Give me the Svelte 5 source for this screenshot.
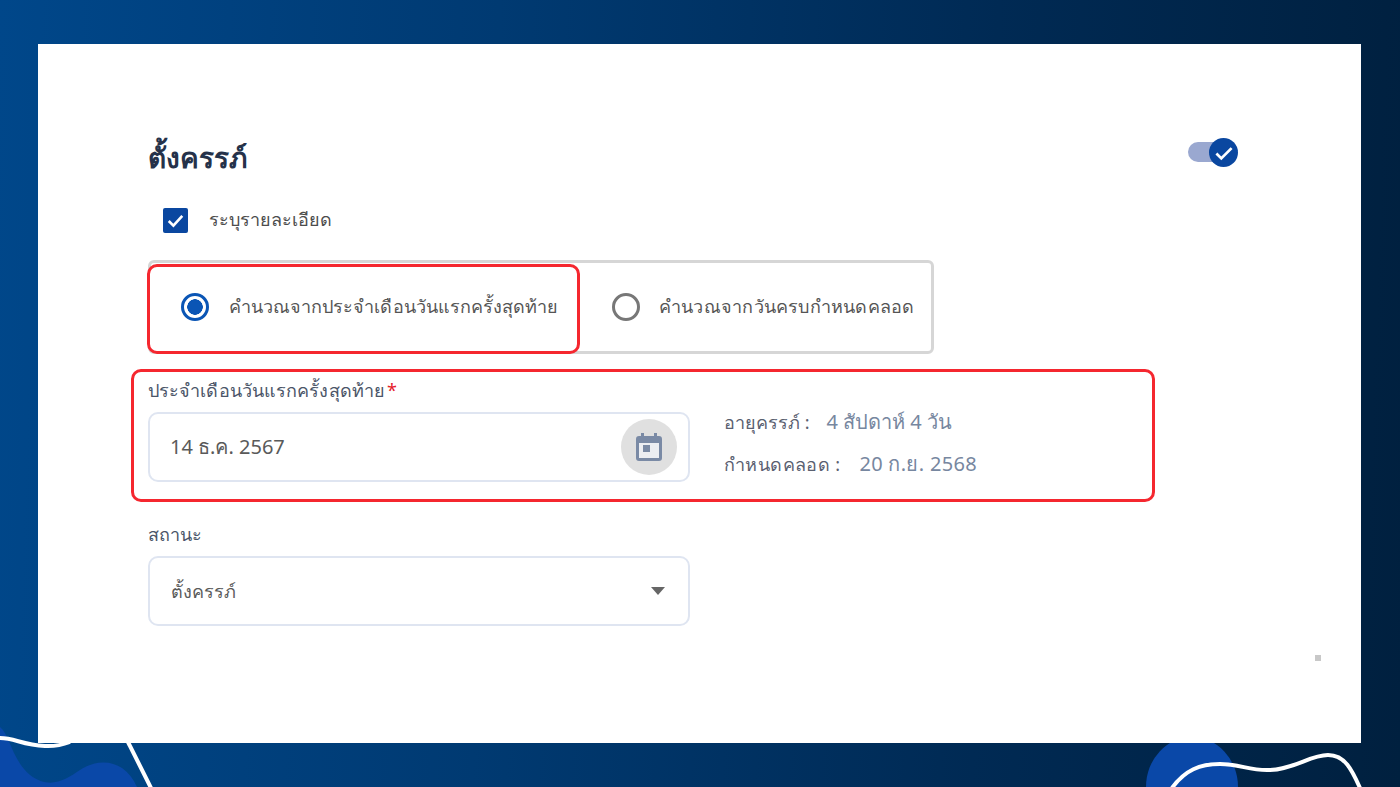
<script lang="ts">
	let detailed = $state(true);
	let method = $state('lmp');
	let status = $state('ตั้งครรภ์');
</script>

<div class="page">
	<svg class="decor" viewBox="0 0 1400 787" aria-hidden="true">
		<path class="blob" d="M0 727C10 735 12 760 30 775C50 790 65 780 80 770C100 757 125 760 137 787L0 787Z" />
		<ellipse class="blob" cx="1192" cy="787" rx="46" ry="50" />
		<path class="wave" d="M0 738C15 738 22 745 45 746C55 746.500 62 745 70 742" />
		<path class="wave" d="M128 742L151 788" />
		<path class="wave" d="M1172 788C1185 770 1200 764 1220 764C1240 764 1250 771 1270 770C1295 769 1310 755 1328 755C1345 755 1352 770 1360 788" />
	</svg>

	<main class="card">
		<header class="head">
			<h1>ตั้งครรภ์</h1>
			<button class="toggle" aria-label="toggle">
				<span class="knob">
					<svg viewBox="0 0 24 24" width="26" height="26"><path d="M5 12.500l4.500 4.500L19 7.500" /></svg>
				</span>
			</button>
		</header>

		<label class="check">
			<span class="box">
				<svg viewBox="0 0 24 24" width="27" height="27"><path d="M5.500 12.500l4.500 4.500 8.500-9.500" /></svg>
			</span>
			<input type="checkbox" bind:checked={detailed} />
			<span class="check-text">ระบุรายละเอียด</span>
		</label>

		<div class="radios">
			<label class="option first">
				<span class="radio on"></span>
				<input type="radio" value="lmp" bind:group={method} />
				คำนวณจากประจำเดือนวันแรกครั้งสุดท้าย
			</label>
			<label class="option second">
				<span class="radio"></span>
				<input type="radio" value="edd" bind:group={method} />
				คำนวณจากวันครบกำหนดคลอด
			</label>
		</div>

		<section class="date-box">
			<div class="field-label date-label">ประจำเดือนวันแรกครั้งสุดท้าย<span class="req">*</span></div>
			<div class="date-row">
				<div class="input">
					<span>14 ธ.ค. 2567</span>
					<span class="cal">
						<svg viewBox="0 0 26 28" width="26" height="28">
							<rect class="cal-bg" x="2" y="9" width="22" height="17" />
							<path d="M5 0h3v3h10V0h3v3h2a3 3 0 0 1 3 3v19a3 3 0 0 1-3 3H3a3 3 0 0 1-3-3V6a3 3 0 0 1 3-3h2zM3 10v15h20V10z" fill-rule="evenodd" />
							<rect x="7" y="12" width="7" height="7" />
						</svg>
					</span>
				</div>
				<div class="info">
					<div><b>อายุครรภ์ :</b><span>4 สัปดาห์ 4 วัน</span></div>
					<div class="due"><b>กำหนดคลอด :</b><span>20 ก.ย. 2568</span></div>
				</div>
			</div>
		</section>

		<div class="field-label status-label">สถานะ</div>
		<div class="input select">
			<span>{status}</span>
			<span class="caret"></span>
		</div>

		<span class="dot"></span>
	</main>
</div>

<style>
	:global(body) {
		margin: 0;
		font-family: "Noto Sans", "DejaVu Sans", sans-serif;
	}

	.page {
		position: relative;
		height: 787px;
		overflow: hidden;
		background: linear-gradient(92deg, #00478a 0%, #003a72 35%, #002a54 70%, #00203f 100%);
	}

	.decor {
		position: absolute;
		inset: 0;
		width: 1400px;
		height: 787px;
	}

	.blob {
		fill: #0a48a8;
	}

	.wave {
		fill: none;
		stroke: #fff;
		stroke-width: 4;
	}

	.card {
		position: relative;
		box-sizing: border-box;
		width: 1323px;
		height: 699px;
		margin-left: 38px;
		top: 44px;
		padding: 93px 123px 0 110px;
		background: #fff;
		color: #4d4d4d;
		font-size: 18px;
	}

	.head {
		display: flex;
		justify-content: space-between;
		align-items: flex-start;
		height: 40px;
	}

	h1 {
		margin: 0;
		font-size: 28px;
		line-height: 40px;
		font-weight: 700;
		color: #25324a;
	}

	.toggle {
		position: relative;
		width: 50px;
		height: 30px;
		padding: 0;
		border: 0;
		background: none;
	}

	.toggle::before {
		content: "";
		position: absolute;
		left: 0;
		top: 5px;
		width: 40px;
		height: 20px;
		border-radius: 10px;
		background: #9aa8d0;
	}

	.knob {
		position: absolute;
		right: 0;
		top: 1px;
		width: 29px;
		height: 29px;
		border-radius: 50%;
		background: #0a47a0;
		display: flex;
		align-items: center;
		justify-content: center;
	}

	.knob path,
	.box path {
		fill: none;
		stroke: #fff;
		stroke-width: 2.500;
	}

	.check {
		display: flex;
		align-items: center;
		gap: 21px;
		height: 32px;
		margin: 27px 0 0 15px;
	}

	.check-text {
		padding-bottom: 2px;
	}

	.check input,
	.option input {
		display: none;
	}

	.box {
		width: 25px;
		height: 25px;
		border-radius: 2px;
		background: #0a47a0;
		display: flex;
		align-items: center;
		justify-content: center;
	}

	.radios {
		box-sizing: border-box;
		display: flex;
		width: 786px;
		height: 94px;
		margin-top: 24px;
		border: 3px solid #d6d6d6;
		border-radius: 6px;
	}

	.option {
		display: flex;
		align-items: center;
		gap: 20px;
		padding-left: 32px;
		padding-bottom: 1px;
		color: #555;
	}

	.second {
		gap: 19px;
		letter-spacing: 0.22px;
	}

	.first {
		box-sizing: border-box;
		width: 433px;
		height: 90px;
		margin: 1px 0 0 -4px;
		padding-left: 31px;
		padding-bottom: 5px;
		gap: 20px;
		letter-spacing: 0.04px;
		border: 3px solid #f5272f;
		border-radius: 10px;
		background: #fff;
	}

	.radio {
		box-sizing: border-box;
		flex: none;
		width: 28px;
		height: 28px;
		border: 3px solid #777;
		border-radius: 50%;
	}

	.radio.on {
		border-color: #0a55b5;
		background: radial-gradient(circle, #0a55b5 0 7.500px, #fff 8px);
	}

	.date-box {
		box-sizing: border-box;
		width: 1024px;
		height: 133px;
		margin: 15px 0 0 -17px;
		padding: 6px 14px 0;
		border: 3px solid #f5272f;
		border-radius: 10px;
	}

	.field-label {
		height: 24px;
		line-height: 24px;
		color: #4b5568;
	}

	.date-label {
		letter-spacing: 0.1px;
	}

	.req {
		color: #e5202a;
		margin-left: 2px;
	}

	.date-row {
		display: flex;
		gap: 34px;
		margin-top: 10px;
	}

	.input {
		box-sizing: border-box;
		display: flex;
		align-items: center;
		justify-content: space-between;
		width: 542px;
		height: 70px;
		padding: 0 11px 0 20px;
		border: 2px solid #dfe5f1;
		border-radius: 10px;
		font-size: 20px;
		color: #5a5a5a;
	}

	.cal {
		width: 56px;
		height: 56px;
		border-radius: 50%;
		background: #e0e0e0;
		display: flex;
		align-items: center;
		justify-content: center;
	}

	.cal svg {
		fill: #7a8aa5;
	}

	.cal .cal-bg {
		fill: #eceef2;
	}

	.info {
		margin-top: -11px;
		line-height: 42px;
		color: #7787a0;
		font-size: 20px;
	}

	.info b {
		font-weight: 400;
		font-size: 18px;
		color: #5a6070;
		margin-right: 17px;
	}

	.due b {
		letter-spacing: 0.4px;
		margin-right: 19px;
	}

	.due span {
		letter-spacing: 0.3px;
	}

	.status-label {
		margin-top: 20px;
	}

	.select {
		margin-top: 10px;
		padding-right: 23px;
		padding-left: 21px;
		font-size: 18px;
	}

	.caret {
		border: 7px solid transparent;
		border-top: 8px solid #666;
		border-bottom: 0;
	}

	.dot {
		position: absolute;
		left: 1277px;
		top: 611px;
		width: 6px;
		height: 6px;
		background: #c8c8c8;
	}
</style>
